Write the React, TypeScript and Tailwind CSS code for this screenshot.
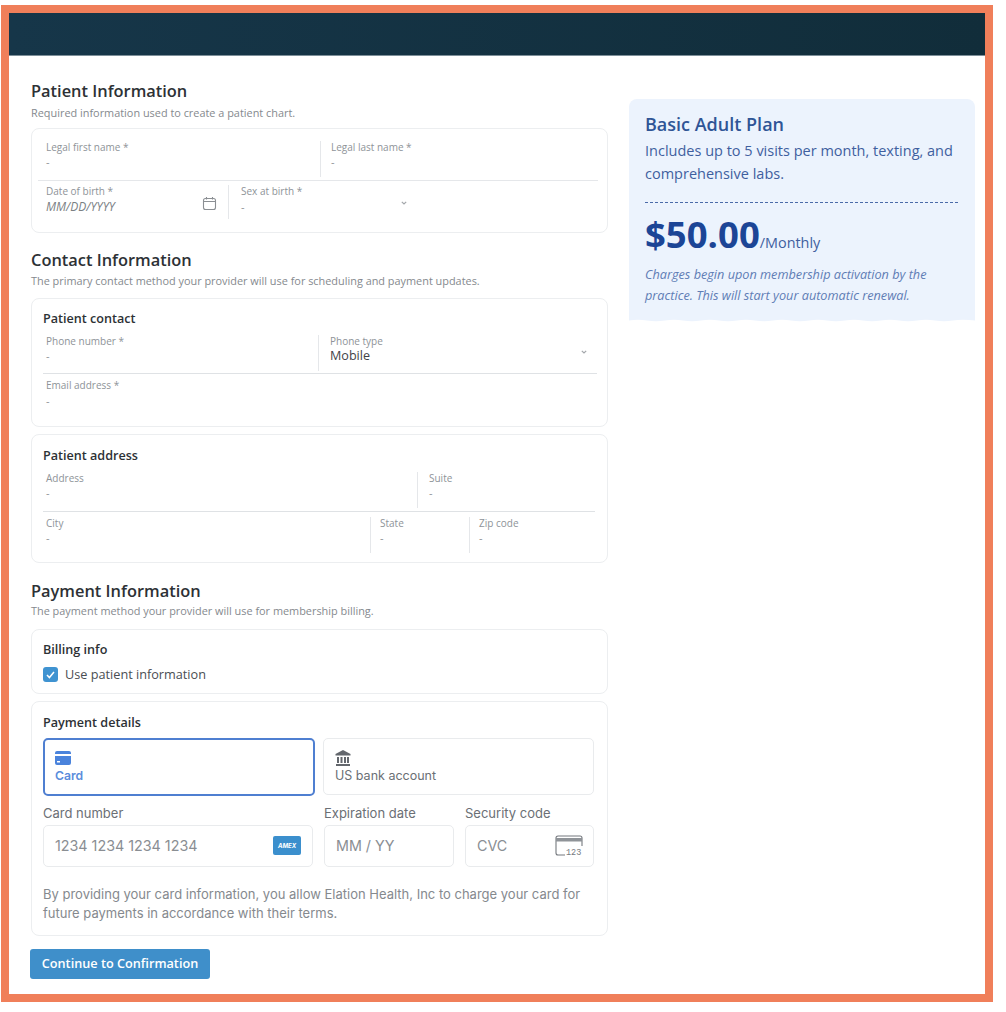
import React from "react";

const OS = "font-['Open_Sans',sans-serif]";

function Field({ label, value = "-", className = "", italic = false, dark = false, tall = false, children }: { label: string; value?: string; className?: string; italic?: boolean; dark?: boolean; tall?: boolean; children?: React.ReactNode }) {
  return (
    <div className={`relative pl-[9px] ${className}`}>
      <div className="text-[10px] leading-[13px] text-[#8e9398]">{label}</div>
      <div className={`${tall ? "leading-[18px]" : "leading-[16px]"} ${dark ? "text-[12.6px] text-[#3f4347]" : italic ? "text-[12px] italic text-[#7b7f84]" : "text-[11px] text-[#8e9398]"}`}>{value}</div>
      {children}
    </div>
  );
}

function VLine({ h = 36 }: { h?: number }) {
  return <div className="w-px shrink-0 bg-[#e5e7ea]" style={{ height: h }} />;
}

function Chevron({ className }: { className: string }) {
  return (
    <svg className={`absolute ${className}`} width="6" height="4" viewBox="0 0 6 4" fill="none">
      <path d="M.8.8L3 3 5.2.8" stroke="#a3a7ab" strokeWidth="1.2" />
    </svg>
  );
}

function Heading({ title, sub, top, subTop }: { title: string; sub: string; top: string; subTop: string }) {
  return (
    <div className={top}>
      <h2 className="text-[16.4px] font-semibold leading-[22px] text-[#2d3135]">{title}</h2>
      <p className={`${subTop} text-[10.9px] leading-[14px] text-[#85898e]`}>{sub}</p>
    </div>
  );
}

function Card({ className = "", children }: { className?: string; children: React.ReactNode }) {
  return <div className={`rounded-[8px] border border-[#eceef0] bg-white ${className}`}>{children}</div>;
}

export default function App() {
  return (
    <div className={`ml-[1px] mt-[5px] h-[997px] w-[992px] border-[8px] border-[#f07f5a] bg-white ${OS}`}>
      <div className="h-[43px] border-b border-[#7d8f99] bg-gradient-to-r from-[#163649] to-[#112d3a]" />
      <div className="flex items-start pl-[22px]">
        <div className="w-[577px]">
          <Heading top="mt-[24px]" subTop="mt-[4px]" title="Patient Information" sub="Required information used to create a patient chart." />
          <Card className="mt-[8px] h-[105px] px-[5px] pt-[12px]">
            <div className="mx-[1px] flex h-[40px] w-[560px] border-b border-[#e5e7ea]">
              <Field label="Legal first name *" className="ml-[-1px] w-[283px]" />
              <VLine />
              <Field label="Legal last name *" className="ml-[1px]" />
            </div>
            <div className="mx-[1px] flex w-[560px] pt-[4px]">
              <Field label="Date of birth *" value="MM/DD/YYYY" italic tall className="ml-[-1px] w-[191px]">
                <svg className="absolute right-[11px] top-[11px]" width="15" height="15" viewBox="0 0 15 15" fill="none" stroke="#8b8f93" strokeWidth="1.1">
                  <rect x="1.5" y="2.5" width="12" height="11" rx="2" />
                  <path d="M1.5 5.5h12M4.5 1v2.5M10.5 1v2.5" />
                </svg>
              </Field>
              <VLine h={34} />
              <Field label="Sex at birth *" tall className="ml-[3px] w-[300px]">
                <Chevron className="left-[169px] top-[16px]" />
              </Field>
            </div>
          </Card>

          <Heading top="mt-[16px]" subTop="mt-[3px]" title="Contact Information" sub="The primary contact method your provider will use for scheduling and payment updates." />
          <Card className="mt-[10px] h-[129px] px-[11px] pt-[11px]">
            <h3 className="text-[12.6px] font-semibold leading-[17px] text-[#2d3135]">Patient contact</h3>
            <div className="mt-[8px] flex h-[39px] w-[554px] border-b border-[#dfe2e5]">
              <Field label="Phone number *" value="-" className="ml-[-6px] w-[281px] pl-[9px]" />
              <VLine />
              <Field label="Phone type" value="Mobile" dark className="flex-1 pl-[11px]">
                <Chevron className="right-[10px] top-[15px]" />
              </Field>
            </div>
            <Field label="Email address *" tall className="ml-[-6px] mt-[5px]" />
          </Card>
          <Card className="mt-[7px] h-[129px] px-[11px] pt-[12px]">
            <h3 className="text-[12.6px] font-semibold leading-[17px] text-[#2d3135]">Patient address</h3>
            <div className="mt-[8px] flex h-[40px] w-[552px] border-b border-[#dfe2e5]">
              <Field label="Address" className="ml-[-6px] w-[380px]" />
              <VLine />
              <Field label="Suite" className="ml-[2px]" />
            </div>
            <div className="mt-[5px] flex w-[552px]">
              <Field label="City" className="ml-[-6px] w-[333px]" />
              <VLine />
              <Field label="State" className="w-[98px]" />
              <VLine />
              <Field label="Zip code" />
            </div>
          </Card>

          <Heading top="mt-[17px]" subTop="mt-[2px]" title="Payment Information" sub="The payment method your provider will use for membership billing." />
          <Card className="mt-[11px] h-[65px] px-[11px] pt-[11px]">
            <h3 className="text-[12.6px] font-semibold leading-[17px] text-[#2d3135]">Billing info</h3>
            <div className="mt-[8px] flex items-center gap-[7px]">
              <span className="flex h-[15px] w-[15px] items-center justify-center rounded-[3px] bg-[#3f93d1]">
                <svg width="9" height="8" viewBox="0 0 9 8" fill="none"><path d="M1 4l2.4 2.6L8 1" stroke="#fff" strokeWidth="1.5" /></svg>
              </span>
              <span className="text-[12.7px] leading-[17px] text-[#4a4e52]">Use patient information</span>
            </div>
          </Card>
          <Card className="mt-[7px] h-[235px] px-[11px] pt-[12px]">
            <h3 className="text-[12.6px] font-semibold leading-[17px] text-[#2d3135]">Payment details</h3>
            <div className="font-['Inter',sans-serif]">
              <div className="mt-[7px] flex gap-[8px]">
                <div className="flex h-[58px] w-[272px] flex-col justify-center rounded-[5px] border-2 border-[#4f7fd1] pl-[10px] text-[#5b8ddc]">
                  <svg width="16" height="14" viewBox="0 0 16 14" fill="#4a83dc">
                    <path d="M0 2a2 2 0 012-2h12a2 2 0 012 2v1H0zM0 5h16v7a2 2 0 01-2 2H2a2 2 0 01-2-2zm2 5v1.5h3V10z" />
                  </svg>
                  <span className="mt-[3px] text-[12.2px] font-semibold leading-[16px]">Card</span>
                </div>
                <div className="flex h-[57px] w-[271px] flex-col justify-center rounded-[5px] border border-[#e9ebed] pl-[11px] text-[#6b6f75]">
                  <svg width="16" height="16" viewBox="0 0 16 16" fill="#63676d">
                    <path d="M8 0l7.5 4v1.5H.5V4zM2 7h2v6H2zm3.5 0h2v6h-2zm3.5 0h2v6H9zm3 0h2v6h-2zM1 14h14v2H1z" />
                  </svg>
                  <span className="mt-[2px] text-[12.5px] font-normal leading-[16px]">US bank account</span>
                </div>
              </div>
              <div className="mt-[8px] flex gap-[11px] text-[13px] leading-[18px] text-[#6b6f75]">
                <div className="w-[270px]">
                  <div>Card number</div>
                  <div className="relative mt-[3px] flex h-[42px] items-center rounded-[5px] border border-[#e9ebed] pl-[11px] text-[14.3px] text-[#8a8e93]">
                    1234 1234 1234 1234
                    <span className="absolute right-[11px] top-[10px] flex h-[19px] w-[28px] items-center justify-center rounded-[2px] bg-[#3b8fcd] text-[6px] font-bold italic leading-none text-white">
                      AMEX
                    </span>
                  </div>
                </div>
                <div className="w-[130px]">
                  <div>Expiration date</div>
                  <div className="mt-[3px] flex h-[42px] items-center rounded-[5px] border border-[#e9ebed] pl-[11px] text-[14.3px] text-[#8a8e93]">MM / YY</div>
                </div>
                <div className="w-[129px]">
                  <div>Security code</div>
                  <div className="relative mt-[3px] flex h-[42px] items-center rounded-[5px] border border-[#e9ebed] pl-[11px] text-[14.3px] text-[#8a8e93]">
                    CVC
                    <svg className="absolute right-[10px] top-[9px]" width="28" height="22" viewBox="0 0 28 22" fill="none">
                      <path d="M10 20H3a2 2 0 01-2-2V3a2 2 0 012-2h22a2 2 0 012 2v8" stroke="#75797e" strokeWidth="1.1" />
                      <rect x="1" y="3" width="26" height="3.5" fill="#8f9398" />
                      <text x="11" y="20" fontSize="8.5" fill="#75797e" fontFamily="Liberation Mono, monospace">123</text>
                    </svg>
                  </div>
                </div>
              </div>
              <p className="mt-[18px] w-[545px] text-[13px] leading-[19px] text-[#85898e]">
                By providing your card information, you allow Elation Health, Inc to charge your card for future payments in accordance with their terms.
              </p>
            </div>
          </Card>
          <button className="ml-[-1px] mt-[13px] flex h-[30px] w-[180px] items-center justify-center rounded-[3px] bg-[#3f8fca] text-[12.7px] font-semibold text-white">
            Continue to Confirmation
          </button>
        </div>

        <aside className="relative ml-[21px] mt-[43px] h-[223px] w-[346px] overflow-hidden rounded-t-[8px] bg-[#ecf3fd] px-[16px] pt-[13px]">
          <h2 className="text-[18px] font-semibold leading-[24px] text-[#2f5596]">Basic Adult Plan</h2>
          <p className="mt-[3px] w-[320px] text-[14.5px] leading-[23px] text-[#3f5f9f]">Includes up to 5 visits per month, texting, and comprehensive labs.</p>
          <div className="mt-[17px] w-[313px] border-t border-dashed border-[#4a6aa8]" />
          <div className="mt-[8px] flex items-baseline">
            <span className="text-[36.5px] font-bold leading-[46px] text-[#1c4596]">$50.00</span>
            <span className="text-[14.4px] text-[#3f5f9f]">/Monthly</span>
          </div>
          <p className="mt-[7px] whitespace-nowrap text-[12.7px] italic leading-[21px] text-[#5f7db5]">Charges begin upon membership activation by the<br />practice. This will start your automatic renewal.</p>
          <svg className="absolute bottom-0 left-0" width="346" height="3" viewBox="0 0 346 3" preserveAspectRatio="none" fill="#fff">
            <path d="M0 1.5Q9 .2 18 1.5T36 1.5T54 1.5T72 1.5T90 1.5T108 1.5T126 1.5T144 1.5T162 1.5T180 1.5T198 1.5T216 1.5T234 1.5T252 1.5T270 1.5T288 1.5T306 1.5T324 1.5T346 1.5V3H0z" />
          </svg>
        </aside>
      </div>
    </div>
  );
}
